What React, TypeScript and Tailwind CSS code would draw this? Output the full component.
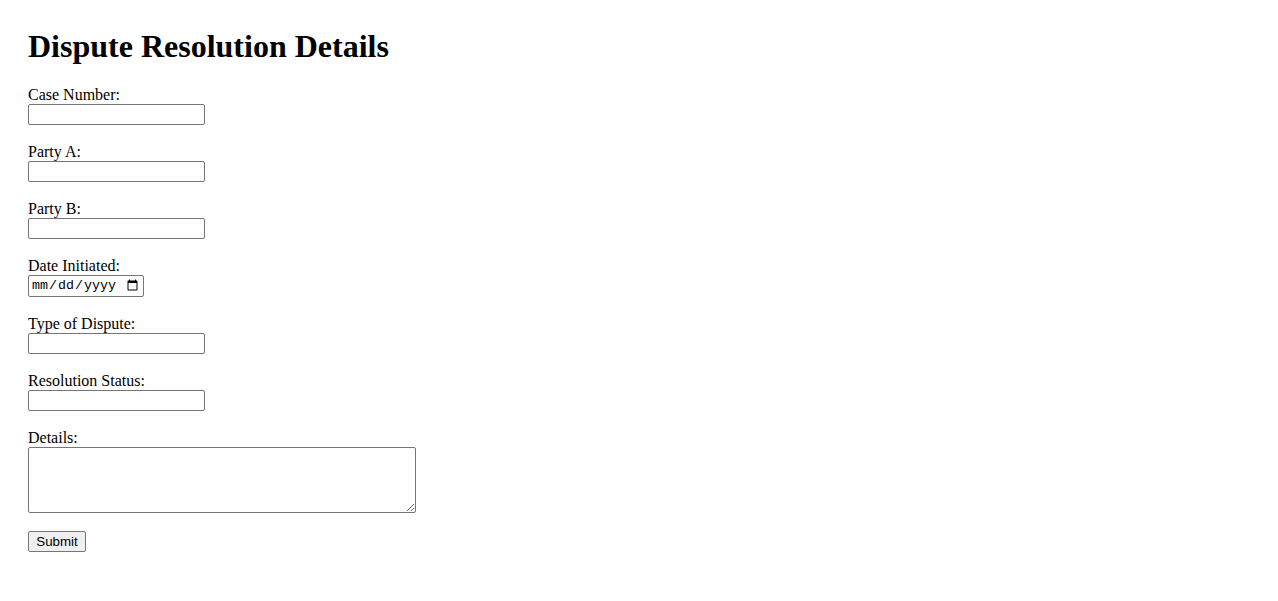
import React from "react";

const fields = [
  { id: "caseNumber", label: "Case Number:", type: "text" },
  { id: "partyA", label: "Party A:", type: "text" },
  { id: "partyB", label: "Party B:", type: "text" },
  { id: "dateInitiated", label: "Date Initiated:", type: "date" },
  { id: "disputeType", label: "Type of Dispute:", type: "text" },
  { id: "resolutionStatus", label: "Resolution Status:", type: "text" },
];

const inputBase =
  "block border border-[#767676] rounded-[2px] bg-white text-black text-[13.33px] px-[2px] py-[1px] outline-none";

export default function App() {
  return (
    <div className="min-h-screen bg-white text-black font-['Liberation_Serif','Times_New_Roman',serif] px-[28px] pt-[28px]">
      <h1 className="text-[32px] font-bold leading-[37px] mb-[21px]">
        Dispute Resolution Details
      </h1>

      <form onSubmit={(e) => e.preventDefault()}>
        {fields.map((f) => (
          <div key={f.id} className="mb-[18px]">
            <label htmlFor={f.id} className="block text-[16px] leading-[18px]">
              {f.label}
            </label>
            {f.type === "date" ? (
              <input
                id={f.id}
                type="date"
                className={`${inputBase} w-[116px] h-[22px] font-['Liberation_Mono',monospace]`}
              />
            ) : (
              <input
                id={f.id}
                type="text"
                className={`${inputBase} w-[177px] h-[21px] font-['Liberation_Sans',Arial,sans-serif]`}
              />
            )}
          </div>
        ))}

        <div className="mb-[18px]">
          <label htmlFor="details" className="block text-[16px] leading-[18px]">
            Details:
          </label>
          <textarea
            id="details"
            className={`${inputBase} w-[388px] h-[66px] font-['Liberation_Mono',monospace] resize`}
          />
        </div>

        <button
          type="submit"
          className="block h-[21px] w-[58px] border border-[#767676] rounded-[2px] bg-[#efefef] text-[13.33px] leading-none text-black font-['Liberation_Sans',Arial,sans-serif]"
        >
          Submit
        </button>
      </form>
    </div>
  );
}
